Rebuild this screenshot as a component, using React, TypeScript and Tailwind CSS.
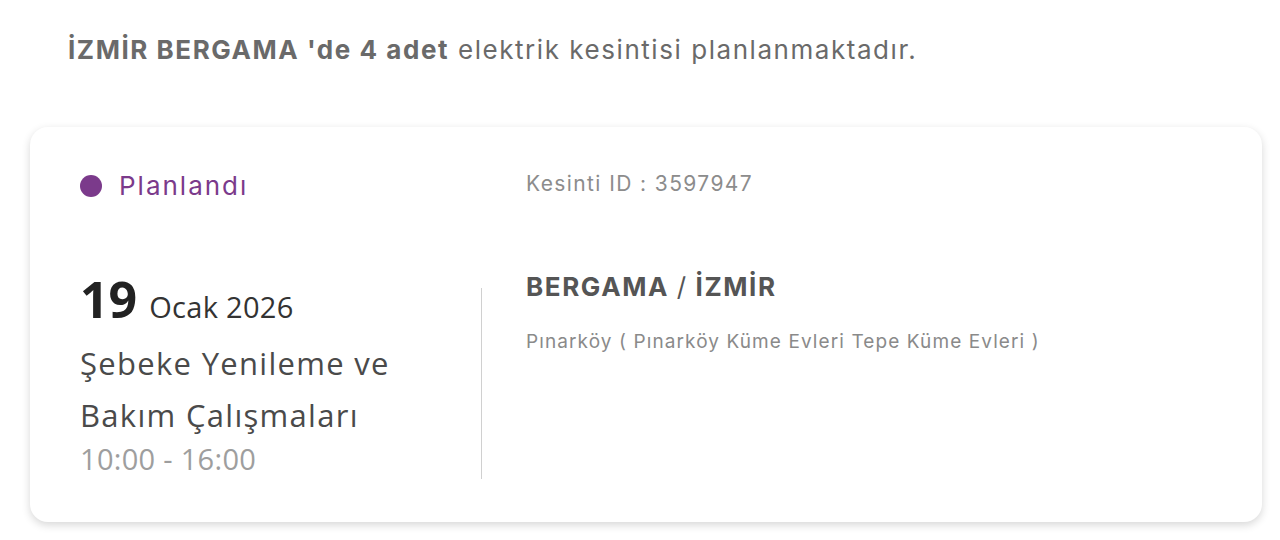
export default function App() {
  return (
    <div className="w-[1280px] h-[540px] bg-white overflow-hidden" style={{ fontFamily: 'Inter, "Noto Sans", sans-serif' }}>
      {/* başlık */}
      <p className="pl-[68px] pt-[30px] text-[26px] leading-[40px] text-[#6a6a6a] tracking-[1.55px] whitespace-nowrap">
        <span className="font-bold">İZMİR BERGAMA 'de 4 adet</span> elektrik kesintisi planlanmaktadır.
      </p>

      {/* kart */}
      <div className="mx-[30px] mt-[57px] w-[1232px] h-[395px] rounded-[18px] bg-white shadow-[0_3px_8px_rgba(0,0,0,0.16)] pl-[50px] pt-[42px]">
        <div className="flex items-start">
          <div className="w-[401px]">
            <div className="flex items-center gap-[17px]">
              <span className="w-[22px] h-[22px] rounded-full bg-[#7b3a8b]" />
              <span className="text-[26px] leading-[34px] text-[#7b3a8b] tracking-[2px]">Planlandı</span>
            </div>
          </div>
          <div className="pl-[45px] text-[21px] leading-[30px] text-[#8c8c8c] tracking-[1.4px]">Kesinti ID : 3597947</div>
        </div>

        <div className="flex mt-[66px]">
          <div className="w-[401px] pt-[6px]" style={{ fontFamily: '"Open Sans", "Noto Sans", sans-serif' }}>
            <div className="flex items-baseline gap-[12px] text-[#222]">
              <span className="text-[50px] leading-[48px] font-bold">19</span>
              <span className="text-[29px] text-[#333] tracking-[0.3px]">Ocak 2026</span>
            </div>
            <div className="mt-[8px] text-[31px] leading-[52px] text-[#4a4a4a] tracking-[1.3px] whitespace-nowrap">
              Şebeke Yenileme ve
              <br />
              Bakım Çalışmaları
            </div>
            <div className="-mt-[2px] text-[29px] leading-[40px] text-[#9e9e9e] tracking-[0.3px]">10:00 - 16:00</div>
          </div>
          <div className="w-px h-[191px] bg-[#d0d0d0] mt-[19px]" />
          <div className="pl-[44px]">
            <div className="text-[26px] leading-[36px] font-bold text-[#555] tracking-[1.6px]">
              BERGAMA <span className="font-normal">/</span> İZMİR
            </div>
            <div className="mt-[23px] text-[19px] leading-[28px] text-[#8a8a8a] tracking-[1.1px]">Pınarköy ( Pınarköy Küme Evleri Tepe Küme Evleri )</div>
          </div>
        </div>
      </div>
    </div>
  );
}
